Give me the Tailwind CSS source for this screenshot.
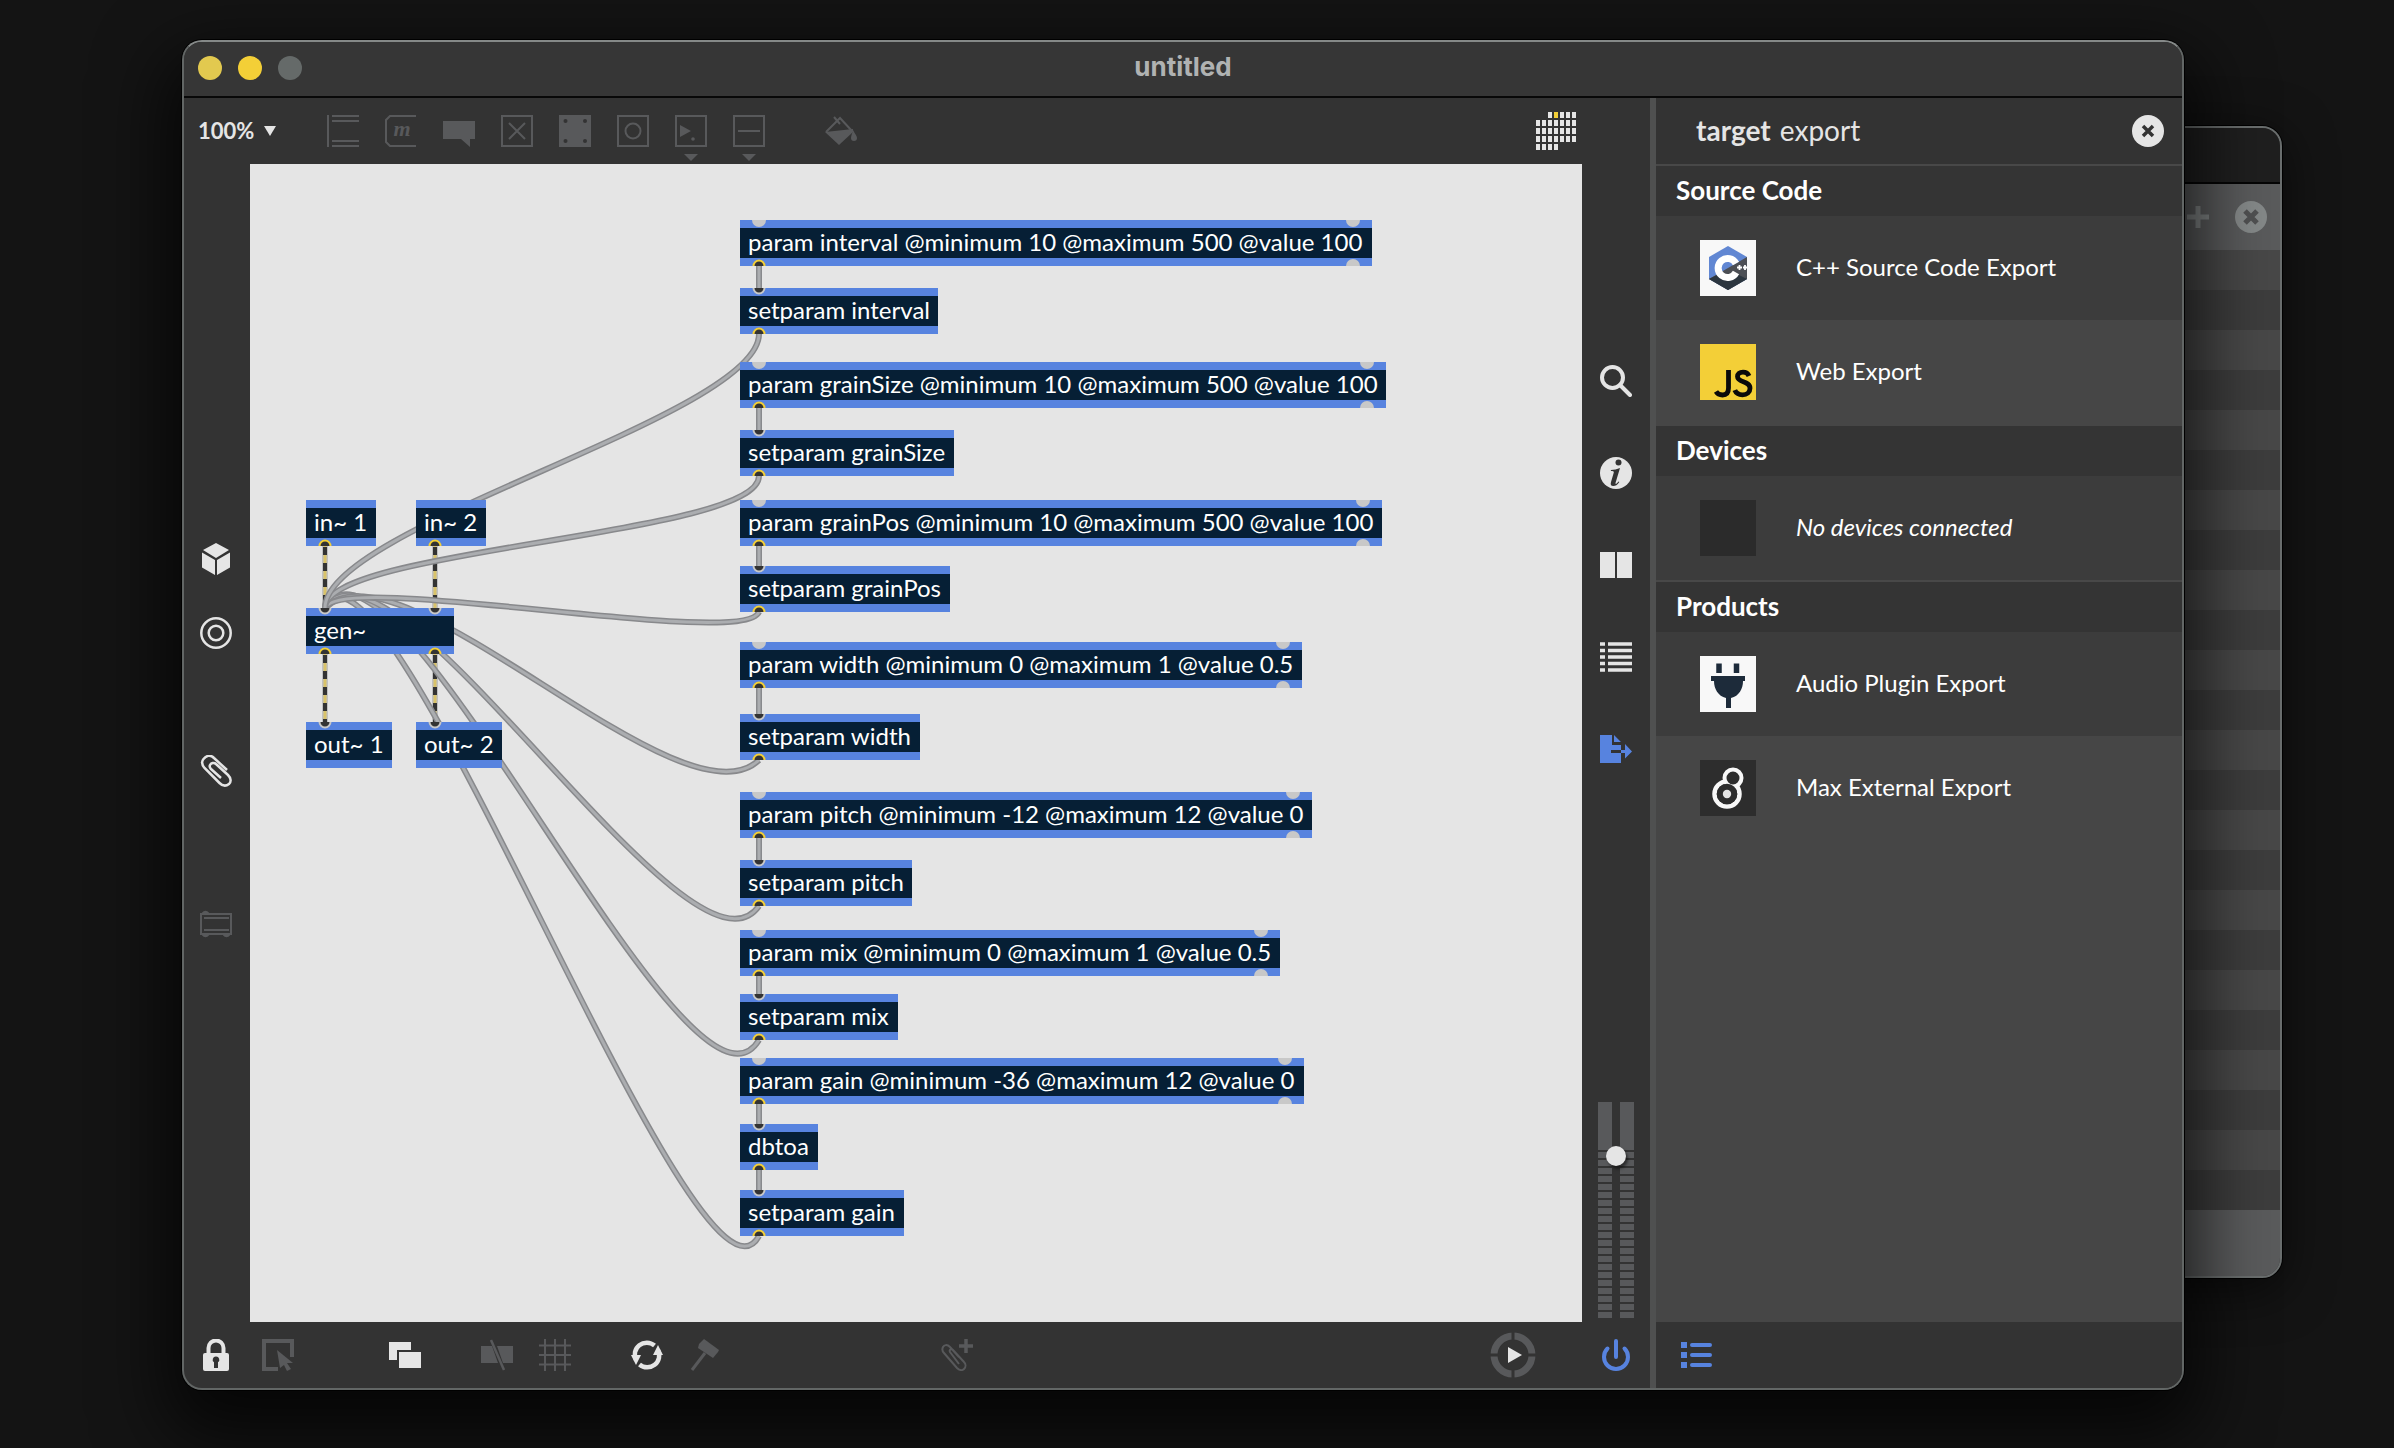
<!DOCTYPE html>
<html lang="en">
<head>
<meta charset="utf-8">
<title>untitled</title>
<script src="https://cdn.jsdelivr.net/npm/@tailwindcss/browser@4"></script>
</head>
<body class="relative flex h-screen overflow-hidden bg-[#141414] pt-10 pr-[210px] pb-[58px] pl-[182px] font-[Lato,sans-serif] text-[#e5e5e5]">

<!-- window behind -->
<section class="absolute top-[126px] right-[112px] bottom-[170px] left-[50%] flex flex-col overflow-hidden rounded-[20px] border-2 border-[#6a6e6e] bg-[#3c3c3c] shadow-[0_0_0_1px_#000,0_10px_50px_rgba(0,0,0,0.6)]" aria-label="Console">
  <div class="h-14 shrink-0 border-b-2 border-[#050505] bg-[#1f1f1f]"></div>
  <div class="flex h-[66px] shrink-0 items-center justify-end gap-6 bg-[#5a5b5c] pr-[13px]">
    <button class="size-8" aria-label="Add"><svg viewBox="0 0 32 32" class="size-8"><path d="M19 5v22M8 16h22" stroke="#7f8383" stroke-width="5"/></svg></button>
    <button class="size-8" aria-label="Clear"><svg viewBox="0 0 32 32" class="size-8"><circle cx="16" cy="16" r="16" fill="#858989"/><path d="M10 10l12 12M22 10L10 22" stroke="#505152" stroke-width="5"/></svg></button>
  </div>
  <div class="min-h-0 flex-1 bg-[repeating-linear-gradient(to_bottom,#484848_0_40px,#3d3d3d_40px_80px)]"></div>
  <div class="h-[66px] shrink-0 bg-[#5a5b5c]"></div>
</section>

<!-- main window -->
<main class="relative flex min-w-0 flex-1 flex-col overflow-hidden rounded-[20px] border-2 border-[#626665] border-t-[#858988] bg-[#333333] shadow-[0_0_0_1px_#000,0_30px_70px_16px_rgba(0,0,0,0.7)]">
  <header class="relative flex h-14 shrink-0 items-center justify-center border-b-2 border-[#080808] bg-[#363636]">
    <div class="absolute top-3.5 left-3.5 flex gap-4">
      <button class="size-6 rounded-full bg-[#e2c94f]" aria-label="Close"></button>
      <button class="size-6 rounded-full bg-[#f3cf37]" aria-label="Minimize"></button>
      <button class="size-6 rounded-full bg-[#656a69]" aria-label="Zoom"></button>
    </div>
    <h1 class="pb-1 font-[Inter,sans-serif] text-[26px] leading-7 font-bold text-[#b0b2b2]">untitled</h1>
  </header>

  <div class="flex min-h-0 flex-1">
    <div class="flex min-w-0 flex-1 flex-col">
      <!-- object toolbar -->
      <div class="flex h-[66px] shrink-0 items-center pr-[74px] pl-3.5 text-[#58595b]">
        <div class="relative mr-[9px] w-[120px]">
          <select aria-label="Zoom level" class="block w-20 appearance-none text-[22px] leading-8 font-bold text-[#e5e5e5] outline-none"><option>100%</option></select>
          <svg viewBox="0 0 12 10" class="pointer-events-none absolute top-[11px] left-[66px] h-2.5 w-3 fill-[#e5e5e5]"><path d="M0 0h12L6 10z"/></svg>
        </div>
        <div class="flex items-center gap-[26px]">
          <button class="size-8" aria-label="Object"><svg viewBox="0 0 32 32" class="size-8 overflow-visible fill-none stroke-current stroke-2"><path d="M1 0v32M5 1h27M5 6h27M5 26h27M5 31h27"/></svg></button>
          <button class="size-8" aria-label="Message"><svg viewBox="0 0 32 32" class="size-8 overflow-visible fill-none stroke-current stroke-2"><path d="M31 1H5L1 5v22l4 4h26"/><text x="17" y="21" text-anchor="middle" class="fill-current stroke-none font-['Liberation_Serif',serif] text-[22px] font-bold italic">m</text></svg></button>
          <button class="size-8" aria-label="Comment"><svg viewBox="0 0 32 32" class="size-8 fill-current"><path d="M0 6h32v18h-5v8l-9-8H0z"/></svg></button>
          <button class="size-8" aria-label="Toggle"><svg viewBox="0 0 32 32" class="size-8 fill-none stroke-current stroke-2"><path d="M1 1h30v30H1zM8 8l16 16M24 8L8 24"/></svg></button>
          <button class="size-8" aria-label="Button"><svg viewBox="0 0 32 32" class="size-8 fill-current"><path d="M0 0h32v32H0z"/><g fill="#333"><circle cx="6.500" cy="6" r="2"/><circle cx="26" cy="6" r="2"/><circle cx="6.500" cy="26" r="2"/><circle cx="26" cy="26" r="2"/></g></svg></button>
          <button class="size-8" aria-label="Number"><svg viewBox="0 0 32 32" class="size-8 fill-none stroke-current stroke-2"><path d="M1 1h30v30H1z"/><circle cx="16" cy="16" r="7.500"/></svg></button>
          <button class="size-8" aria-label="Slider"><svg viewBox="0 0 32 32" class="size-8 overflow-visible fill-none stroke-current stroke-2"><path d="M1 1h30v30H1z"/><path d="M5 10l11 6-11 6z" class="fill-current stroke-none"/><circle cx="18" cy="24" r="1.800" class="fill-current stroke-none"/><path d="M9 39h14l-7 7z" class="fill-current stroke-none"/></svg></button>
          <button class="size-8" aria-label="Line"><svg viewBox="0 0 32 32" class="size-8 overflow-visible fill-none stroke-current stroke-2"><path d="M1 1h30v30H1zM5 16h22"/><path d="M9 39h14l-7 7z" class="fill-current stroke-none"/></svg></button>
        </div>
        <button class="ml-15 size-8" aria-label="Format color"><svg viewBox="0 0 32 32" class="size-8"><path d="M1 17L15 3l12 13M9 2l6 7" fill="none" stroke="currentColor" stroke-width="2"/><path d="M0 17l28-3v3L14 30z" fill="currentColor"/><path d="M28 15c2 4 4 6 4 8a3 3 0 0 1-6 0c0-2 1-4 2-8z" fill="currentColor"/></svg></button>
        <button class="ml-auto h-[38px] w-10" aria-label="Calendar"><svg id="grid-icon" viewBox="0 0 40 38" class="h-[38px] w-10 fill-[#e5e5e5]"></svg></button>
      </div>

      <div class="flex min-h-0 flex-1">
        <!-- left bar -->
        <nav class="flex w-[66px] shrink-0 flex-col items-center pt-[379px] pr-0.5" aria-label="Browse">
          <button class="size-8" aria-label="Packages"><svg viewBox="0 0 32 32" class="size-8 fill-[#e5e5e5]"><path d="M16 0l13 7-13 8L3 7zM2 9.500l13 7.500v15L2 24.500zM30 9.500L17 17v15l13-7.500z"/></svg></button>
          <button class="mt-[42px] size-8" aria-label="Target"><svg viewBox="0 0 32 32" class="size-8 fill-none stroke-[#e5e5e5]" stroke-width="2.500"><circle cx="16" cy="16" r="14.700"/><circle cx="16" cy="16" r="7.300"/></svg></button>
          <button class="mt-[106px] size-8" aria-label="Snippets"><svg viewBox="0 0 32 32" class="size-8 fill-none stroke-[#e5e5e5]" stroke-width="2.500"><path d="M27 15L14 3C10-1 6 1 3.500 4S2 10 4.500 13l15 15c4 4 7 3 9.500 1s2-6-1-9L16 9c-2-2-5-1-6 1s0 3 1 4l10 9"/></svg></button>
          <button class="mt-[122px] size-8" aria-label="Rack"><svg viewBox="0 0 32 32" class="size-8 fill-none stroke-[#58595b] stroke-2"><path d="M1 5h30v20H1zM4 9h25M4 21h25"/><path d="M3 4a3 3 0 0 1 5 0zM3 26a3 3 0 0 0 5 0zM24 26a3 3 0 0 0 5 0z" class="fill-[#58595b]"/></svg></button>
        </nav>

        <!-- patch canvas -->
        <div id="patch" class="relative min-w-0 flex-1 overflow-hidden bg-[#e5e5e5]">
          <svg id="cords" class="absolute inset-0 h-full w-full fill-none"></svg>
        </div>

        <!-- right bar -->
        <nav class="flex w-[68px] shrink-0 flex-col items-center gap-15 pt-[201px] pb-1" aria-label="Sidebar">
          <button class="size-8" aria-label="Search"><svg viewBox="0 0 32 32" class="size-8 fill-none stroke-[#e5e5e5]"><circle cx="12.500" cy="12.500" r="10.500" stroke-width="4"/><path d="M20 20l10 10" stroke-width="4" stroke-linecap="round"/></svg></button>
          <button class="size-8" aria-label="Inspector"><svg viewBox="0 0 32 32" class="size-8"><circle cx="16" cy="16" r="16" fill="#e5e5e5"/><circle cx="18.500" cy="5.500" r="3" fill="#333"/><path d="M11 13c3 0 6-1 9-2l-4.500 15c-.3 1.200.6 1 1.500.2l1.500-1.700.8.600c-2 3-4 4-6 4-2.500 0-3-1.600-2.300-4l2.800-9.500c.3-1.300-1-1.600-3-1.600z" fill="#333"/></svg></button>
          <button class="size-8" aria-label="Reference"><svg viewBox="0 0 32 32" class="size-8 fill-[#e5e5e5]"><path d="M0 3h15v26H0zM17 3h15v26H17z"/></svg></button>
          <button class="size-8" aria-label="Console"><svg viewBox="0 0 32 32" class="size-8 stroke-[#e5e5e5]" stroke-width="3.500"><path d="M0 3h5M8 3h24M0 9.500h5M8 9.500h24M0 16h5M8 16h24M0 22.500h5M8 22.500h24M0 29h5M8 29h24"/></svg></button>
          <button class="size-8" aria-label="Export"><svg viewBox="0 0 32 32" class="size-8 fill-[#5783df]"><path d="M0 2h12v10h9v5H11v3h10v10H0zM14 2l7 7h-7zM21 17h4v-6l7 7.500-7 7V20h-4z"/></svg></button>
          <div class="relative mt-auto h-54 w-9">
            <svg id="meter" viewBox="0 0 36 216" class="h-54 w-9 fill-[#58595b]"></svg>
            <span class="absolute top-11 left-2 size-5 rounded-full bg-[#e5e5e5] shadow-[2px_3px_3px_rgba(0,0,0,0.5)]"></span>
            <input type="range" aria-label="Volume" value="75" class="absolute inset-0 h-full w-full opacity-0 [direction:rtl] [writing-mode:vertical-lr]">
          </div>
        </nav>
      </div>

      <!-- patcher footer -->
      <footer class="flex h-[66px] shrink-0 items-center pr-[18px] pl-4 text-[#58595b]">
        <button class="size-8" aria-label="Lock"><svg viewBox="0 0 32 32" class="size-8"><path d="M8.500 15V9a7.500 7.500 0 0 1 15 0v6" fill="none" stroke="#e5e5e5" stroke-width="4"/><rect x="3" y="14" width="26" height="18" rx="2" fill="#e5e5e5"/><path d="M16 17.500a3.200 3.200 0 0 1 2 5.800V29h-4v-5.700a3.200 3.200 0 0 1 2-5.800z" fill="#333"/></svg></button>
        <button class="ml-[30px] size-8" aria-label="Presentation select"><svg viewBox="0 0 32 32" class="size-8"><path d="M30 18V2H2v28h14" fill="none" stroke="currentColor" stroke-width="4"/><path d="M15 11l16 13h-6l4 6-4 2-3-6-4 3z" fill="currentColor"/></svg></button>
        <button class="ml-[95px] size-8" aria-label="Presentation mode"><svg viewBox="0 0 32 32" class="size-8 fill-[#e5e5e5]"><path d="M0 3h22v8H8v10H0zM10 13h22v16H10z"/></svg></button>
        <button class="ml-15 size-8" aria-label="Patchcords"><svg viewBox="0 0 32 32" class="size-8"><path d="M0 7h11l6 17H0zM16 7h16v17H22z" fill="currentColor"/><path d="M10 1l13 30" stroke="currentColor" stroke-width="2.500"/></svg></button>
        <button class="ml-[26px] size-8" aria-label="Grid"><svg viewBox="0 0 32 32" class="size-8 fill-none stroke-current stroke-2"><path d="M6 0v32M16 0v32M26 0v32M0 6.500h32M0 16h32M0 25.500h32"/></svg></button>
        <button class="ml-15 size-8" aria-label="Refresh"><svg viewBox="0 0 32 32" class="size-8"><path d="M5 21a12 12 0 0 1 18.500-14.500M27 11a12 12 0 0 1-18.500 14.500" fill="none" stroke="#e5e5e5" stroke-width="4.500"/><path d="M27 6l5 10h-10zM5 26L0 16h10z" fill="#e5e5e5"/></svg></button>
        <button class="ml-[26px] size-8" aria-label="Debug"><svg viewBox="0 0 32 32" class="size-8"><path d="M3 31L16 14" stroke="currentColor" stroke-width="3"/><path d="M10 5l5-5 15 11-1 2-5 6-15-10z" fill="currentColor"/></svg></button>
        <button class="ml-55 size-8" aria-label="Add snippet"><svg viewBox="0 0 32 32" class="size-8 fill-none stroke-current stroke-2"><path d="M18 18L9 8C6 5 3 6 2 8s-1 4 1 6l13 15c2 2 5 3 7 1s2-5 0-7L12 11c-2-2-4 0-3 2l9 12"/><path d="M25 0v14M18 7h14" stroke-width="3.500"/></svg></button>
        <button class="mr-16 ml-auto h-[46px] w-[46px]" aria-label="Play"><svg viewBox="0 0 46 46" class="h-[46px] w-[46px]"><circle cx="23" cy="23" r="19" fill="none" stroke="#58595b" stroke-width="7"/><path d="M23 0v46M0 23h46" stroke="#333" stroke-width="3"/><circle cx="23" cy="23" r="15" fill="#333"/><path d="M18 15l14 8-14 8z" fill="#e5e5e5"/></svg></button>
        <button class="size-8" aria-label="Audio on"><svg viewBox="0 0 32 32" class="size-8 fill-none stroke-[#5783df]" stroke-width="4" stroke-linecap="round"><path d="M16 2v16M7.500 9.500a12 12 0 1 0 17 0"/></svg></button>
      </footer>
    </div>

    <!-- export sidebar -->
    <aside class="flex w-[532px] shrink-0 flex-col border-l-[6px] border-[#4f5050] bg-[#464646]">
      <div class="flex h-[66px] shrink-0 items-center bg-[#333333] pr-4.5 pl-10 text-[28px] leading-8">
        <h2 class="pb-0.5"><span class="font-bold">target</span> <span class="ml-0.5">export</span></h2>
        <button class="ml-auto size-8" aria-label="Close sidebar"><svg viewBox="0 0 32 32" class="size-8"><circle cx="16" cy="16" r="16" fill="#e5e5e5"/><path d="M11 11l10 10M21 11L11 21" stroke="#333" stroke-width="3.500"/></svg></button>
      </div>
      <h3 class="h-[52px] border-t-2 border-[#484848] bg-[#343434] pt-2 pl-5 text-[26px] leading-8 font-bold text-white">Source Code</h3>
      <a href="#cpp" class="flex h-26 items-center gap-10 bg-[#3c3c3c] pl-11 text-2xl leading-8 text-white">
        <svg viewBox="0 0 56 56" class="size-14"><path d="M0 0h56v56H0z" fill="#f8f8f8"/><path d="M28 6l19 11v22L28 50 9 39V17z" fill="#6187d3"/><path d="M28 28l19-11v22L28 50 9 39z" fill="#4c4f55"/><path d="M9 39l10-5h18l10 5-19 11z" fill="#2c3640"/><path d="M36 23.500a9.500 9.500 0 1 0 0 9" fill="none" stroke="#fff" stroke-width="7"/><path d="M37 27.500h5M39.500 25v5M43 27.500h4M45 25v5" stroke="#fff" stroke-width="1.800"/></svg>
        <span class="pb-0.5">C++ Source Code Export</span></a>
      <a href="#web" class="flex h-26 items-center gap-10 pl-11 text-2xl leading-8 text-white">
        <svg viewBox="0 0 56 56" class="size-14"><path d="M0 0h56v56H0z" fill="#f3cf37"/><path d="M28.500 26v18c0 5-2 7-6 7-3 0-5-1-6.500-3.500M49 32c-1-2.500-3-3.800-6-3.800-3.500 0-5.500 1.800-5.500 4.400 0 6.400 12.500 4 12.500 11.600 0 4-3 6.600-7.500 6.600-4 0-6.500-1.600-7.700-4.600" fill="none" stroke="#0a0a0a" stroke-width="4.800"/></svg>
        <span class="pb-0.5">Web Export</span></a>
      <h3 class="h-[52px] border-t-2 border-[#464646] bg-[#343434] pt-2 pl-5 text-[26px] leading-8 font-bold text-white">Devices</h3>
      <div class="flex h-26 items-center gap-10 bg-[#3c3c3c] pl-11 text-2xl leading-8 text-white italic">
        <span class="size-14 bg-[#2b2b2b]"></span><span class="pb-0.5">No devices connected</span></div>
      <h3 class="h-[52px] border-t-2 border-[#484848] bg-[#343434] pt-2 pl-5 text-[26px] leading-8 font-bold text-white">Products</h3>
      <a href="#plugin" class="flex h-26 items-center gap-10 bg-[#3c3c3c] pl-11 text-2xl leading-8 text-white">
        <svg viewBox="0 0 56 56" class="size-14"><path d="M0 0h56v56H0z" fill="#f8f8f8"/><path d="M11 20h34v5h-2c0 8-4 15-12 17v10h-5V42c-8-2-12-9-12-17h-3z" fill="#1d2b3a"/><path d="M19 7.500V17M36.500 7.500V17" stroke="#1d2b3a" stroke-width="5.500"/></svg>
        <span class="pb-0.5">Audio Plugin Export</span></a>
      <a href="#external" class="flex h-26 items-center gap-10 pl-11 text-2xl leading-8 text-white">
        <svg viewBox="0 0 56 56" class="size-14"><path d="M0 0h56v56H0z" fill="#2d2d2d"/><circle cx="27" cy="34" r="12.500" fill="#2d2d2d" stroke="#f8f8f8" stroke-width="4.500"/><circle cx="33" cy="18" r="8.500" fill="#2d2d2d" stroke="#f8f8f8" stroke-width="4"/><circle cx="27" cy="34" r="10.300" fill="#2d2d2d"/><circle cx="27" cy="34" r="4.200" fill="#e5e5e5"/></svg>
        <span class="pb-0.5">Max External Export</span></a>
      <div class="mt-auto flex h-[66px] shrink-0 items-center bg-[#333333] pl-[25px]">
        <button class="size-8" aria-label="List view"><svg viewBox="0 0 32 32" class="size-8 fill-[#5783df]"><path d="M0 3h6v6H0zM0 13h6v6H0zM0 23h6v6H0z"/><path d="M11 6h18M11 16h18M11 26h18" class="stroke-[#5783df]" stroke-width="4" stroke-linecap="round"/></svg></button>
      </div>
    </aside>
  </div>
</main>

<script>
// name, x, y, width, inlets, outlets (port: [offset, kind])
const L = 19;
const boxes = [
  ['in~ 1', 56, 336, 70, [], [[L, 'out']]],
  ['in~ 2', 166, 336, 70, [], [[L, 'out']]],
  ['gen~', 56, 444, 148, [[L, 'in'], [129, 'in']], [[L, 'out'], [129, 'out']]],
  ['out~ 1', 56, 558, 86, [[L, 'in']], []],
  ['out~ 2', 166, 558, 86, [[L, 'in']], []],
  ['param interval @minimum 10 @maximum 500 @value 100', 490, 56, 632],
  ['setparam interval', 490, 124, 198, [[L, 'in']], [[L, 'out']]],
  ['param grainSize @minimum 10 @maximum 500 @value 100', 490, 198, 646],
  ['setparam grainSize', 490, 266, 214, [[L, 'in']], [[L, 'out']]],
  ['param grainPos @minimum 10 @maximum 500 @value 100', 490, 336, 642],
  ['setparam grainPos', 490, 402, 210, [[L, 'in']], [[L, 'out']]],
  ['param width @minimum 0 @maximum 1 @value 0.5', 490, 478, 562],
  ['setparam width', 490, 550, 180, [[L, 'in']], [[L, 'out']]],
  ['param pitch @minimum -12 @maximum 12 @value 0', 490, 628, 572],
  ['setparam pitch', 490, 696, 172, [[L, 'in']], [[L, 'out']]],
  ['param mix @minimum 0 @maximum 1 @value 0.5', 490, 766, 540],
  ['setparam mix', 490, 830, 158, [[L, 'in']], [[L, 'out']]],
  ['param gain @minimum -36 @maximum 12 @value 0', 490, 894, 564],
  ['dbtoa', 490, 960, 78, [[L, 'in']], [[L, 'out']]],
  ['setparam gain', 490, 1026, 164, [[L, 'in']], [[L, 'out']]],
];
const port = (cx, cy, kind) => kind === 'free'
  ? `<circle cx="${cx}" cy="${cy}" r="7" fill="#c8c8c8"/>`
  : `<circle cx="${cx}" cy="${cy}" r="5.5" fill="#333" stroke="${kind === 'in' ? '#c8c8c8' : '#f3cf37'}" stroke-width="2"/>`;
const patch = document.getElementById('patch');
for (const [name, x, y, w, ins, outs] of boxes) {
  const i = ins || [[L, 'free'], [w - L, 'free']];
  const o = outs || [[L, 'out'], [w - L, 'free']];
  const el = document.createElement('div');
  el.className = "absolute h-[46px] border-y-8 border-[#5783df] bg-[#061f35] pl-2 text-2xl leading-7 whitespace-nowrap text-white";
  el.style.cssText = `left:${x}px;top:${y}px;width:${w}px`;
  el.innerHTML = `${name}<svg class="absolute -top-2 left-0 h-[46px] w-full overflow-hidden">${i.map(p => port(p[0], 0, p[1])).join('')}${o.map(p => port(p[0], 46, p[1])).join('')}</svg>`;
  patch.append(el);
}

// signal cords, then message cords
let out = '';
for (const [x, a, b] of [[75, 382, 444], [185, 382, 444], [75, 490, 558], [185, 490, 558]])
  out += `<path d="M${x} ${a}V${b}" stroke="#c0c0c0" stroke-width="6"/><path d="M${x} ${a}V${b}" stroke="#d9c36a" stroke-width="3"/><path d="M${x} ${a + 1}V${b}" stroke="#333" stroke-width="4" stroke-dasharray="8 8"/>`;
const message = d => `<path d="${d}" stroke="#88898c" stroke-width="6"/><path d="${d}" stroke="#abadb0" stroke-width="3"/>`;
for (const [a, b] of [[102, 124], [244, 266], [382, 402], [524, 550], [674, 696], [812, 830], [940, 960], [1006, 1026]])
  out += message(`M509 ${a}V${b}`);
// start y, vertical pull, horizontal pull
for (const [y, a, c] of [[1072, 113, 62], [876, 116, 71], [742, 97, 69], [596, 74, 77], [448, 38, 15], [312, 60, 0], [170, 82, 0]])
  out += message(`M509 ${y}C${509 - c} ${y + a} ${75 + c} ${444 - a} 75 444`);
document.getElementById('cords').innerHTML = out;

// level meter
let m = '';
for (const x of [0, 22]) {
  m += `<rect x="${x}" y="0" width="14" height="48"/>`;
  for (let y = 50; y < 216; y += 8) m += `<rect x="${x}" y="${y}" width="14" height="6"/>`;
}
document.getElementById('meter').innerHTML = m;

// month grid: first row starts late, last row ends early
let g = '';
for (let r = 0; r < 5; r++) for (let c = 0; c < 7; c++) {
  if ((r === 0 && c < 2) || (r === 4 && c > 3)) continue;
  g += `<rect x="${c * 6}" y="${r * 8}" width="4" height="6"${r === 0 && c === 3 ? ' fill="#f3cf37"' : ''}/>`;
}
document.getElementById('grid-icon').innerHTML = g;
</script>
</body>
</html>
